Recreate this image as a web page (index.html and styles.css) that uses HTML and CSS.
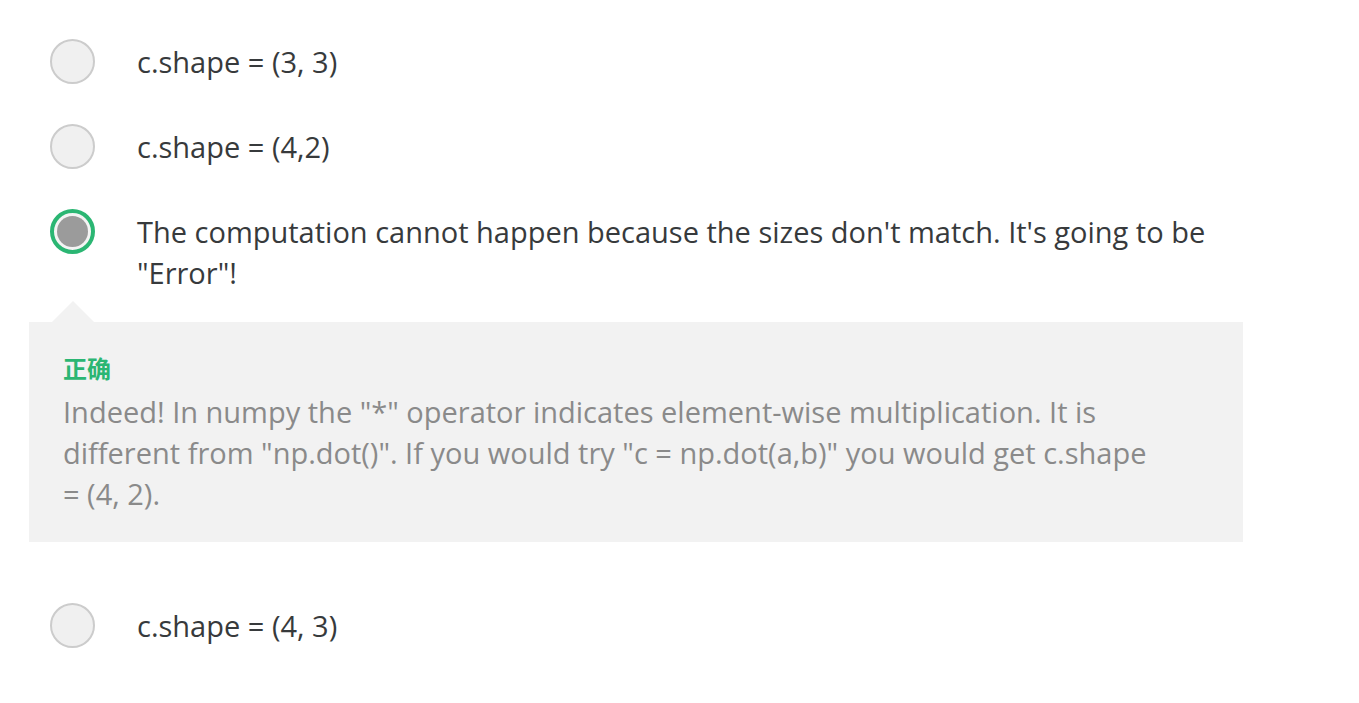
FILE: index.html
```html
<!DOCTYPE html>
<html>
<head>
<meta charset="utf-8">
<link rel="stylesheet" href="styles.css">
</head>
<body>
<div class="quiz">
  <div class="option">
    <span class="radio"></span>
    <span class="label">c.shape = (3, 3)</span>
  </div>
  <div class="option">
    <span class="radio"></span>
    <span class="label">c.shape = (4,2)</span>
  </div>
  <div class="option">
    <span class="radio selected"><span class="dot"></span></span>
    <span class="label">The computation cannot happen because the sizes don't match. It's going to be "Error"!</span>
  </div>
  <div class="feedback">
    <div class="feedback-title">正确</div>
    <div class="feedback-text">Indeed! In numpy the "*" operator indicates element-wise multiplication. It is different from "np.dot()". If you would try "c = np.dot(a,b)" you would get c.shape = (4, 2).</div>
  </div>
  <div class="option">
    <span class="radio"></span>
    <span class="label">c.shape = (4, 3)</span>
  </div>
</div>
</body>
</html>
```

FILE: styles.css
```css
html, body {
  margin: 0;
  padding: 0;
  background: #ffffff;
}
body {
  font-family: "Open Sans", "Noto Sans CJK SC", sans-serif;
  color: #373a3c;
  min-height: 703px;
}
.quiz {
  width: 1214px;
  padding: 41px 0 50px 29px;
  display: flex;
  flex-direction: column;
}
.option {
  display: flex;
  align-items: flex-start;
  padding-left: 21px;
}
.option + .option {
  margin-top: 44px;
}
.radio {
  flex: 0 0 auto;
  width: 45px;
  height: 45px;
  box-sizing: border-box;
  border: 2px solid #cccccc;
  border-radius: 50%;
  background: #f0f0f0;
  margin: -2px 0 -2px 0;
  display: flex;
  align-items: center;
  justify-content: center;
}
.radio.selected {
  border: 4px solid #2bb673;
  background: #f4f4f4;
}
.radio .dot {
  width: 31px;
  height: 31px;
  border-radius: 50%;
  background: #9b9b9b;
}
.label {
  margin-left: 42px;
  font-size: 29px;
  line-height: 41px;
  padding-right: 10px;
}
.feedback {
  position: relative;
  background: #f2f2f2;
  margin-top: 29px;
  padding: 28px 80px 28px 34px;
}
.feedback + .option {
  margin-top: 63px;
}
.feedback::before {
  content: "";
  position: absolute;
  top: -21px;
  left: 23px;
  border-left: 21px solid transparent;
  border-right: 21px solid transparent;
  border-bottom: 21px solid #f2f2f2;
}
.feedback-title {
  color: #2bb673;
  font-weight: bold;
  font-size: 24px;
  line-height: 36px;
  margin-bottom: 5px;
  font-family: "Noto Sans CJK SC", sans-serif;
}
.feedback-text {
  color: #8a8a8a;
  font-size: 29px;
  line-height: 41px;
}
```
